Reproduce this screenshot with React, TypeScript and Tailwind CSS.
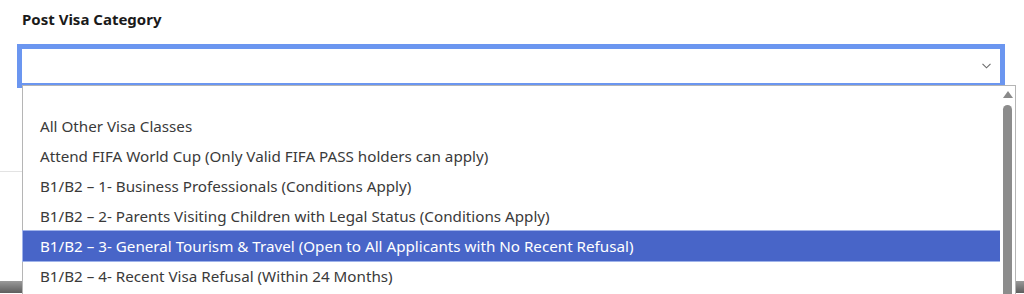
import { useState } from "react";

const options = [
  "",
  "All Other Visa Classes",
  "Attend FIFA World Cup (Only Valid FIFA PASS holders can apply)",
  "B1/B2 – 1- Business Professionals (Conditions Apply)",
  "B1/B2 – 2- Parents Visiting Children with Legal Status (Conditions Apply)",
  "B1/B2 – 3- General Tourism & Travel (Open to All Applicants with No Recent Refusal)",
  "B1/B2 – 4- Recent Visa Refusal (Within 24 Months)",
];

const App = () => {
  const [active] = useState(5);

  return (
    <div className="relative w-[1024px] h-[294px] overflow-hidden bg-white font-['Noto_Sans','Open_Sans',sans-serif]">
      <div className="pl-[22px] pt-[9px] text-[15px] leading-[20px] font-bold text-[#1a1a1a]">
        Post Visa Category
      </div>

      {/* select box */}
      <div className="ml-[17px] mt-[15px] w-[988px] h-[44px] border-[5px] border-[#6b96f0] bg-white flex items-center justify-end pr-[9px]">
        <svg width="9" height="6" viewBox="0 0 9 6" fill="none">
          <path d="M0.5 0.8 L4.5 4.8 L8.5 0.8" stroke="#6b6b6b" strokeWidth="1.1" />
        </svg>
      </div>

      {/* page content behind the open list */}
      <div className="mt-[83px] w-[40px] border-t border-[#e3e3e3]" />
      <div className="mt-[109px] h-[12px] bg-gradient-to-b from-[#9a9a9a] to-[#5e5e5e]" />

      {/* open option list */}
      <div className="absolute left-[22px] top-[85px] w-[994px] h-[220px] border border-[#b5b5b5] bg-white flex">
        <div className="flex-1 flex flex-col">
          {options.map((opt, i) => (
            <div
              key={i}
              className={
                i === 0
                  ? "h-[25px]"
                  : i === active
                    ? "h-[30px] pl-[17px] pt-[1px] flex items-center text-[15.2px] text-white bg-[#4865c8] outline outline-1 outline-[#9fb3ea]"
                    : "h-[30px] pl-[17px] pt-[1px] flex items-center text-[15.2px] text-[#3a3a3a]"
              }
            >
              {opt}
            </div>
          ))}
        </div>
        <div className="w-[15px] flex flex-col items-center pt-[5px] bg-white">
          <svg width="10" height="7" viewBox="0 0 10 7">
            <path d="M5 0 L10 7 L0 7 Z" fill="#8a8a8a" />
          </svg>
          <div className="mt-[7px] w-[9px] flex-1 rounded-t-full bg-[#8c8c8c]" />
        </div>
      </div>
    </div>
  );
};

export default App;
